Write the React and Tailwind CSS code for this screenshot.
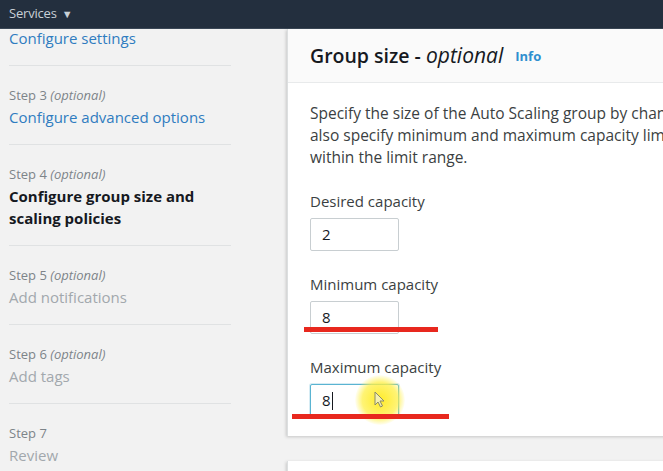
import React from 'react'

const steps = [
    { label: "Step 3", optional: true, title: ["Configure advanced options"], state: "link" },
    { label: "Step 4", optional: true, title: ["Configure group size and", "scaling policies"], state: "current" },
    { label: "Step 5", optional: true, title: ["Add notifications"], state: "disabled" },
    { label: "Step 6", optional: true, title: ["Add tags"], state: "disabled" },
    { label: "Step 7", optional: false, title: ["Review"], state: "disabled" },
];

const titleColor = {
    link: "text-[#2f7cc0]",
    current: "text-[#16191f] font-bold",
    disabled: "text-[#a2a8ad]",
};

const Field = ({ label, value, focused, children }) => (
    <div className="flex flex-col">
        <div className="text-[15px] leading-[22px] text-[#3b3f42]">{label}</div>
        <div
            className={`relative mt-[6px] w-[89px] h-[33px] rounded-[2px] bg-white flex items-center pl-[11px] text-[15px] text-[#16191f] ${
                focused ? "border border-[#5ab4d2] shadow-[0_0_0_1px_rgba(90,180,210,0.25)]" : "border border-[#c8ced1]"
            }`}
        >
            {value}
            {focused && <span className="w-px h-[18px] bg-[#16191f] ml-[1px]"></span>}
            {children}
        </div>
    </div>
);

const App = () => {
    return (
        <div className="relative w-[663px] h-[471px] overflow-hidden bg-[#f2f2f2]" style={{ fontFamily: '"Open Sans", "Noto Sans", sans-serif' }}>
            <div className="h-[29px] bg-[#232f3e] flex items-center px-[9px] border-b border-[#3a4756]">
                <span className="text-[13px] text-[#c9d0d6] tracking-[-0.2px]">Services</span>
                <span className="text-[11px] text-[#c9d0d6] ml-[5px]">▼</span>
            </div>

            <div className="flex">
                {/* wizard steps */}
                <div className="w-[287px] shrink-0 pl-[9px]">
                    <div className="w-[222px]">
                        <div className="-mt-[2px] pb-[16px] border-b border-[#e0e2e3]">
                            <div className="text-[15px] leading-[22px] text-[#2f7cc0]">Configure settings</div>
                        </div>
                        {steps.map((s, i) => (
                            <div key={i} className={`pt-[18px] pb-[16px] ${i < steps.length - 1 ? "border-b border-[#e0e2e3]" : ""}`}>
                                <div className="text-[13px] leading-[22px] text-[#7d8489]">
                                    {s.label}
                                    {s.optional && <span className="italic"> (optional)</span>}
                                </div>
                                {s.title.map((t, j) => (
                                    <div key={j} className={`text-[15px] leading-[22px] ${titleColor[s.state]}`}>{t}</div>
                                ))}
                            </div>
                        ))}
                    </div>
                </div>

                {/* main content */}
                <div className="flex flex-col gap-[25px]">
                    <div className="w-[620px] bg-white shadow-[-1px_1px_3px_rgba(0,0,0,0.18)] border-l border-[#dcdfe0]">
                        <div className="h-[54px] bg-[#fafafa] border-b border-[#e8eaeb] flex items-center pl-[22px]">
                            <span className="text-[19.5px] font-semibold text-[#16191f]">
                                Group size - <span className="italic font-normal text-[21px]">optional</span>
                            </span>
                            <span className="ml-[12px] mt-[2px] text-[13px] font-bold text-[#2f8fcf]">Info</span>
                        </div>
                        <div className="pl-[22px] pt-[19px] pb-[19px]">
                            <p className="text-[15.5px] leading-[22px] text-[#3b3f42] whitespace-nowrap">
                                Specify the size of the Auto Scaling group by changing the desired capacity. You can
                                <br />
                                also specify minimum and maximum capacity limits. Your desired capacity must be
                                <br />
                                within the limit range.
                            </p>
                            <div className="mt-[22px] flex flex-col gap-[22px]">
                                <Field label="Desired capacity" value="2" />
                                <Field label="Minimum capacity" value="8" />
                                <Field label="Maximum capacity" value="8" focused>
                                    <span className="absolute left-[44px] top-[-10px] w-[50px] h-[50px] rounded-full bg-[radial-gradient(circle,rgba(255,234,30,0.95)_0%,rgba(255,240,70,0.75)_50%,rgba(255,250,120,0)_72%)]"></span>
                                    <svg className="absolute left-[62px] top-[6px]" width="14" height="18" viewBox="0 0 14 18">
                                        <path d="M2 1 L2 14 L5 11 L7.5 16 L9.5 15 L7 10 L11 10 Z" fill="#f5f0b0" stroke="#8a8a6a" strokeWidth="1" />
                                    </svg>
                                </Field>
                            </div>
                        </div>
                    </div>
                    <div className="w-[620px] h-[40px] bg-white shadow-[-1px_1px_3px_rgba(0,0,0,0.18)] border-l border-[#dcdfe0]"></div>
                </div>
            </div>

            {/* red underline annotations */}
            <div className="absolute left-[304px] top-[327px] w-[134px] h-[5px] bg-[#e8281e]"></div>
            <div className="absolute left-[292px] top-[414px] w-[157px] h-[5px] bg-[#e8281e]"></div>
        </div>
    );
}

export default App
